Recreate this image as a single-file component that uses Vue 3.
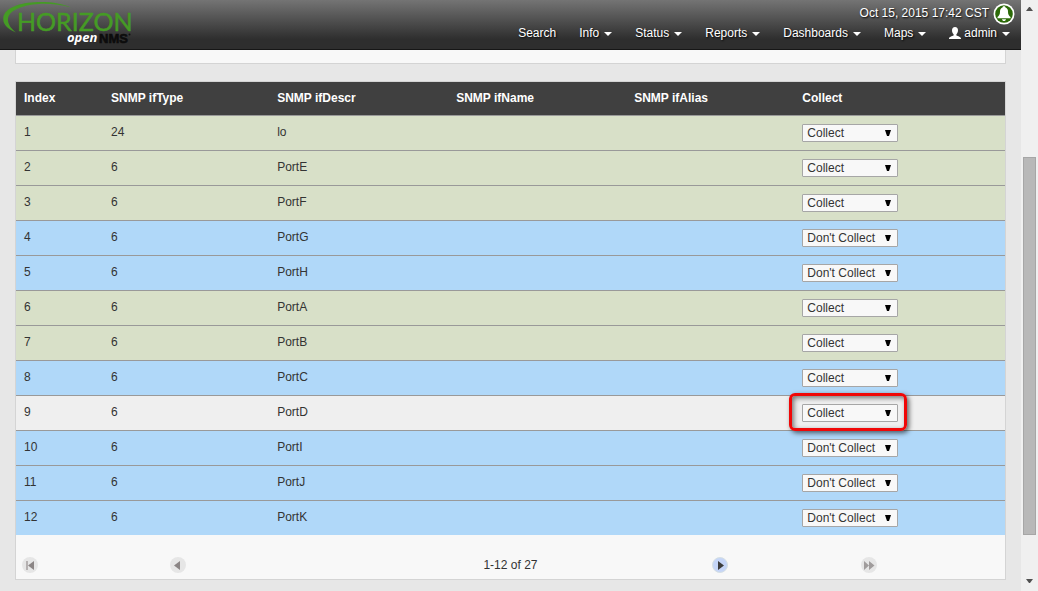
<script setup>
import { ref } from 'vue'

const menus = [
  { label: 'Search', caret: false },
  { label: 'Info', caret: true },
  { label: 'Status', caret: true },
  { label: 'Reports', caret: true },
  { label: 'Dashboards', caret: true },
  { label: 'Maps', caret: true },
  { label: 'admin', caret: true, user: true },
]

const rows = ref([
  { index: 1, type: 24, descr: 'lo', collect: 'Collect', tone: 'green' },
  { index: 2, type: 6, descr: 'PortE', collect: 'Collect', tone: 'green' },
  { index: 3, type: 6, descr: 'PortF', collect: 'Collect', tone: 'green' },
  { index: 4, type: 6, descr: 'PortG', collect: "Don't Collect", tone: 'blue' },
  { index: 5, type: 6, descr: 'PortH', collect: "Don't Collect", tone: 'blue' },
  { index: 6, type: 6, descr: 'PortA', collect: 'Collect', tone: 'green' },
  { index: 7, type: 6, descr: 'PortB', collect: 'Collect', tone: 'green' },
  { index: 8, type: 6, descr: 'PortC', collect: 'Collect', tone: 'blue' },
  { index: 9, type: 6, descr: 'PortD', collect: 'Collect', tone: 'hover', marked: true },
  { index: 10, type: 6, descr: 'PortI', collect: "Don't Collect", tone: 'blue' },
  { index: 11, type: 6, descr: 'PortJ', collect: "Don't Collect", tone: 'blue' },
  { index: 12, type: 6, descr: 'PortK', collect: "Don't Collect", tone: 'blue' },
])
</script>

<template>
  <div class="window">
    <div class="page">
      <header class="topbar">
        <a class="logo" href="#" aria-label="Horizon OpenNMS">
          <svg width="136" height="48" viewBox="0 0 136 48">
            <path d="M16 32.500C7 29 2.500 23.500 3.300 17.500C4.800 8 19 2.500 38 2C51 1.700 63 3.600 71 7.500C60 4.500 50 3.300 39 3.900C22 4.900 9 10.500 8 18.500C7.400 23.500 11 28.500 16 32.500Z" fill="#459b25" />
            <text x="17" y="31" class="logo-main">HORIZON</text>
            <text x="67" y="42" class="logo-open">open</text>
            <text x="99" y="43" class="logo-nms">NMS</text>
            <circle cx="129.500" cy="34.500" r="1" fill="#111" />
          </svg>
        </a>
        <div class="top-right">
          <div class="clock">
            <span>Oct 15, 2015 17:42 CST</span>
            <svg width="22" height="22" viewBox="0 0 22 22" role="img" aria-label="Notices on">
              <circle cx="11" cy="11" r="10.500" fill="#fff" />
              <circle cx="11" cy="11" r="8.800" fill="#2c6a08" />
              <path d="M11 3.200c-.9 0-1.400.5-1.500 1.200C7.500 5 7 6.700 7 8.700c0 2.500-.8 3.900-2.500 5.300v1.300h13V14C15.800 12.600 15 11.200 15 8.700c0-2-.5-3.700-2.500-4.300-.1-.7-.6-1.200-1.500-1.200z" fill="#fff" />
              <path d="M9 16.200h4c-.2 1.200-.9 1.800-2 1.800s-1.800-.6-2-1.800z" fill="#fff" />
            </svg>
          </div>
          <nav class="menu">
            <a v-for="m in menus" :key="m.label" href="#">
              <svg v-if="m.user" class="user" width="12" height="12" viewBox="0 0 12 12">
                <path d="M6 0C4 0 3 1.500 3 3.300c0 1.700.6 3 1.600 3.900v1.200C3 9.200 0 9.700 0 11.500V12h12v-.5c0-1.800-3-2.300-4.600-3.100V7.200C8.400 6.300 9 5 9 3.300 9 1.500 8 0 6 0z" fill="#fff" />
              </svg>{{ m.label }}<i v-if="m.caret" class="caret"></i>
            </a>
          </nav>
        </div>
      </header>

      <main class="content">
        <section class="panel previous"></section>
        <section class="panel">
          <table class="grid">
            <colgroup>
              <col class="c-index" /><col class="c-type" /><col class="c-descr" />
              <col class="c-name" /><col class="c-alias" /><col />
            </colgroup>
            <thead>
              <tr>
                <th>Index</th><th>SNMP ifType</th><th>SNMP ifDescr</th>
                <th>SNMP ifName</th><th>SNMP ifAlias</th><th>Collect</th>
              </tr>
            </thead>
            <tbody>
              <tr v-for="r in rows" :key="r.index" :class="r.tone">
                <td>{{ r.index }}</td>
                <td>{{ r.type }}</td>
                <td>{{ r.descr }}</td>
                <td></td>
                <td></td>
                <td>
                  <div class="pick">
                    <select v-model="r.collect" :aria-label="'Collect ' + r.descr">
                      <option>Collect</option>
                      <option>Don't Collect</option>
                    </select>
                    <svg class="arrow" width="6" height="6" viewBox="0 0 6 6"><path d="M0 0h6L4 6H2z" fill="#000" /></svg>
                    <span v-if="r.marked" class="ring"></span>
                  </div>
                </td>
              </tr>
            </tbody>
          </table>
          <div class="pager">
            <button aria-label="First page" disabled>
              <svg width="16" height="16" viewBox="0 0 16 16"><circle cx="8" cy="8" r="8" fill="#e6e6e6" /><path d="M4 4h2v9H4z" fill="#b5b1b1" /><path d="M12 4v9L6 8.500z" fill="#8b8585" /></svg>
            </button>
            <button aria-label="Previous page" disabled>
              <svg width="16" height="16" viewBox="0 0 16 16"><circle cx="8" cy="8" r="8" fill="#e6e6e6" /><path d="M10 4v9L4 8.500z" fill="#8b8585" /></svg>
            </button>
            <span class="count">1-12 of 27</span>
            <button aria-label="Next page">
              <svg width="16" height="16" viewBox="0 0 16 16"><circle cx="8" cy="8" r="7.500" fill="#c5d5f7" stroke="#d5dfe3" /><path d="M6 4v9l6-4.500z" fill="#3d3d3d" /></svg>
            </button>
            <button aria-label="Last page" disabled>
              <svg width="16" height="16" viewBox="0 0 16 16"><circle cx="8" cy="8" r="8" fill="#e6e6e6" /><path d="M3 4v9l5-4.500zM8 4v9l5.500-4.500z" fill="#a09c9c" /></svg>
            </button>
          </div>
        </section>
      </main>
    </div>

    <div class="scrollbar">
      <svg width="9" height="5" viewBox="0 0 9 5"><path d="M4 0h1l3 4H1z" fill="#505050" /></svg>
      <div class="track"><div class="thumb"></div></div>
      <svg width="9" height="5" viewBox="0 0 9 5"><path d="M4 4h1l3-4H1z" fill="#505050" /></svg>
    </div>
  </div>
</template>

<style>
body {
  background: #e7e7e7;
}
</style>

<style scoped>
.window {
  display: flex;
  min-height: 100vh;
  font: 12px/16px "Liberation Sans", Arial, sans-serif;
  color: #333;
}
.window * {
  box-sizing: border-box;
}
.page {
  flex: 1;
  min-width: 0;
}
.topbar {
  display: flex;
  justify-content: space-between;
  height: 50px;
  background: linear-gradient(#747474, #2e2e2e 80%, #2e2e2e);
  border-bottom: 1px solid #161616;
}
.logo-main {
  font: 25px Lato, sans-serif;
  fill: #459b25;
  stroke: #459b25;
  stroke-width: 0.5px;
}
.logo-open {
  font: italic bold 13px "Open Sans", sans-serif;
  fill: #fff;
}
.logo-nms {
  font: bold 13px "Liberation Sans", sans-serif;
  fill: #0c0c0c;
  stroke: #0c0c0c;
  stroke-width: 0.6px;
}
.top-right {
  display: flex;
  flex-direction: column;
  align-items: flex-end;
  padding-top: 3px;
  color: #fff;
  text-shadow: 1px 1px 2px #000;
}
.clock {
  display: flex;
  gap: 4px;
  height: 22px;
  padding-right: 6px;
}
.clock span {
  padding-top: 2px;
}
.menu {
  display: flex;
  gap: 23px;
  padding-right: 11px;
}
.menu a {
  display: flex;
  align-items: center;
  color: #fff;
  text-decoration: none;
}
.user {
  margin-right: 3px;
}
.caret {
  margin: 2px 0 0 5px;
  border: 4px solid transparent;
  border-top-color: #fff;
  border-bottom: 0;
}
.content {
  padding: 0 15px;
}
.panel {
  background: #f8f8f8;
  border: 1px solid #d4d4d4;
}
.previous {
  height: 14px;
  margin-bottom: 17px;
  border-top: 0;
}
.grid {
  width: 100%;
  table-layout: fixed;
  border-collapse: separate;
  border-spacing: 0;
}
.c-index { width: 8.8%; }
.c-type { width: 16.8%; }
.c-descr { width: 18.1%; }
.c-name { width: 18%; }
.c-alias { width: 17%; }
th {
  height: 33px;
  padding: 0 8px 2px;
  text-align: left;
  color: #fff;
  background: #404040;
}
td {
  padding: 8px;
  border-top: 1px solid #999;
  vertical-align: top;
}
.green { background: #d8e0c8; }
.blue { background: #b0d8f9; }
.hover { background: #efefef; }
.pick {
  position: relative;
  width: 96px;
  height: 18px;
}
select {
  display: block;
  width: 100%;
  height: 18px;
  padding: 0 4px;
  appearance: none;
  font: inherit;
  color: #333;
  background: #f8f8f8;
  border: 1px solid #a6a6a6;
  border-radius: 1px;
}
.arrow {
  position: absolute;
  top: 6px;
  right: 7px;
  pointer-events: none;
}
.ring {
  position: absolute;
  inset: -11px -9px -9px -13px;
  border: 3px solid #f00707;
  border-radius: 6px;
  box-shadow: 2px 2px 5px rgba(0, 0, 0, 0.6), inset 2px 2px 5px rgba(0, 0, 0, 0.5);
  pointer-events: none;
}
.pager {
  display: grid;
  grid-template-columns: 15.1% 15.1% 1fr 15.1% 14.7%;
  align-items: center;
  height: 44px;
  padding: 16px 0 0 6px;
}
.pager button {
  width: 16px;
  height: 16px;
  padding: 0;
  border: 0;
  background: none;
}
.pager svg {
  display: block;
}
.count {
  padding-right: 10px;
  text-align: center;
}
.scrollbar {
  display: flex;
  flex-direction: column;
  align-items: center;
  width: 17px;
  padding: 7px 0;
  background: #f0f0f0;
}
.track {
  display: flex;
  flex: 1;
  flex-direction: column;
  width: 13px;
  padding: 145px 0 44px;
}
.thumb {
  flex: 1;
  background: #b8b8b8;
  border: 1px solid #a6a6a6;
}
</style>
